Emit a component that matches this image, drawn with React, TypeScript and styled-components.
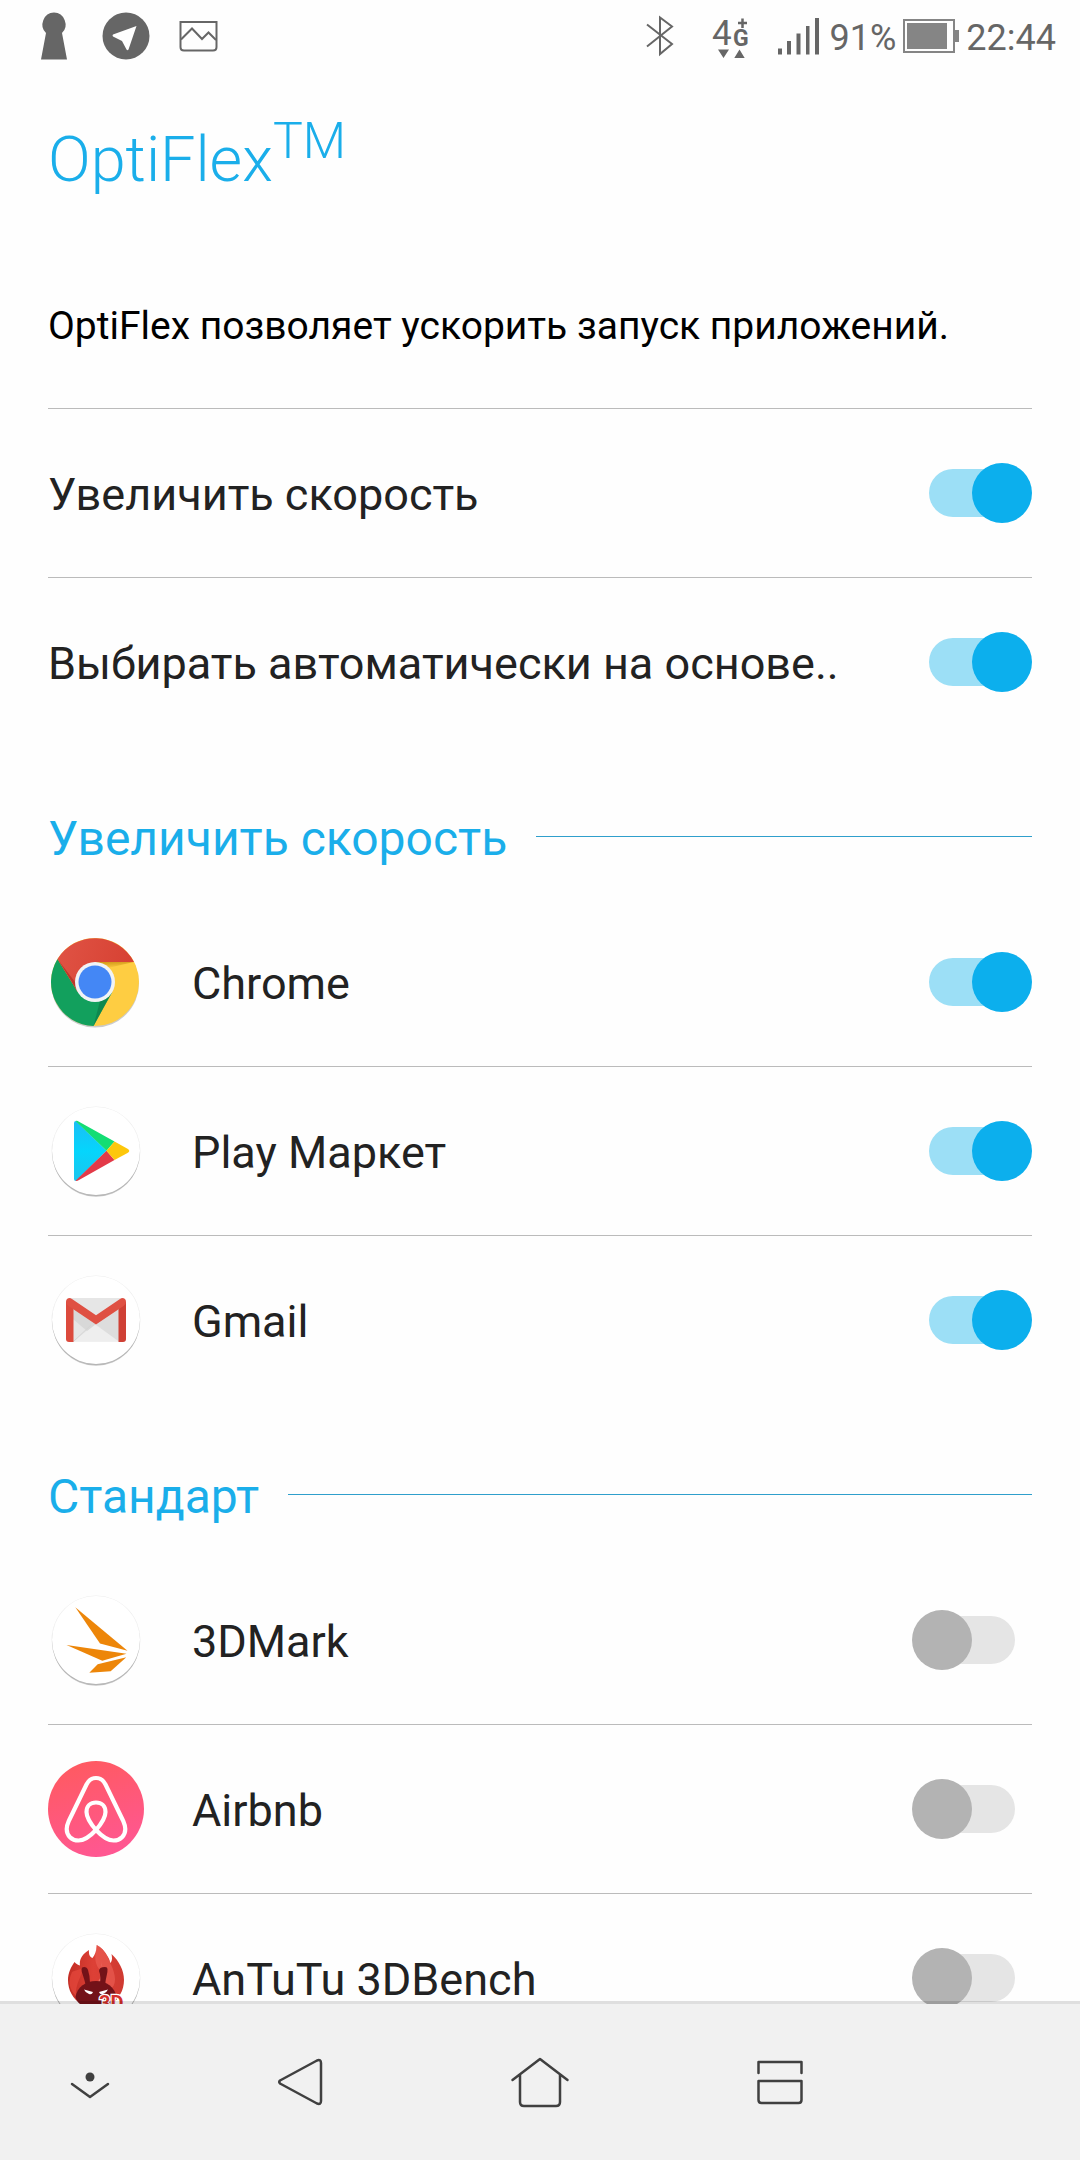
import React, { useId } from "react";
import styled, { createGlobalStyle } from "styled-components";

const GlobalStyle = createGlobalStyle`
  *, *::before, *::after { box-sizing: border-box; }
  body {
    margin: 0;
    background: #fefefe;
    color: #222;
    font-family: Roboto, "Noto Sans", sans-serif;
  }
`;

const Screen = styled.div`
  display: flex;
  flex-direction: column;
  height: 100vh;
`;

const StatusBar = styled.header`
  display: flex;
  flex: none;
  align-items: center;
  justify-content: space-between;
  height: 72px;
  padding: 0 24px 0 40px;
  color: #666;
`;

const StatusGroup = styled.div<{ $gap: number }>`
  display: flex;
  align-items: center;
  gap: ${(p) => p.$gap}px;
`;

const StatusText = styled.span`
  padding-top: 3px;
  font-size: 36px;
  line-height: 44px;
`;

const Glyph = styled.svg`
  display: block;
  flex: none;
`;

const Content = styled.main`
  flex: 1;
  min-height: 0;
  margin-bottom: -3px;
  padding: 50px 48px 0;
  overflow-y: auto;
  scrollbar-width: none;
`;

const Title = styled.h1`
  margin: 0;
  color: #1aaeea;
  font-size: 63px;
  font-weight: 300;
  line-height: 76px;
`;

const Trademark = styled.sup`
  font-size: 50px;
  line-height: 0;
  vertical-align: 23px;
`;

const Description = styled.p`
  margin: 0;
  padding: 105px 0 59px;
  border-bottom: 1px solid #bbb;
  color: #000;
  font-size: 39px;
  line-height: 46px;
`;

const List = styled.ul`
  margin: 0;
  padding: 0;
  list-style: none;
`;

const Row = styled.li`
  display: flex;
  align-items: center;
  height: 169px;

  &:not(:last-child) { border-bottom: 1px solid #bbb; }
  &:last-child { height: 168px; }
`;

const IconSlot = styled.span`
  flex: none;
  width: 144px;
`;

const Label = styled.label`
  flex: 1;
  padding-top: 3px;
  font-size: 45px;
  line-height: 54px;
`;

const Toggle = styled.input`
  display: grid;
  flex: none;
  align-items: center;
  width: 120px;
  height: 60px;
  margin: 0;
  appearance: none;
  cursor: pointer;

  &::before, &::after {
    content: "";
    grid-area: 1 / 1;
  }
  &::before {
    justify-self: center;
    width: 86px;
    height: 48px;
    border-radius: 24px;
    background: #e5e5e5;
  }
  &::after {
    justify-self: start;
    width: 60px;
    height: 60px;
    border-radius: 50%;
    background: #b3b3b3;
  }
  &:checked::before { background: #9cdff6; }
  &:checked::after {
    justify-self: end;
    background: #0cafed;
  }
`;

const SectionTitle = styled.h2`
  display: flex;
  align-items: center;
  gap: 29px;
  height: 152px;
  margin: 0;
  padding-top: 28px;
  color: #1aaeea;
  font-size: 48px;
  font-weight: 400;
  line-height: 56px;

  &::after {
    content: "";
    flex: 1;
    height: 1px;
    background: #2f9fcc;
  }
`;

const SectionName = styled.span`
  padding-top: 5px;
`;

const NavBar = styled.nav`
  position: relative;
  display: grid;
  flex: none;
  grid-template-columns: 180px 240px 240px 240px;
  height: 159px;
  border-top: 3px solid rgba(0, 0, 0, 0.12);
  background: #f1f1f1;
  background-clip: padding-box;
`;

const NavButton = styled.button`
  display: grid;
  place-items: center;
  padding: 0;
  border: 0;
  background: none;
  color: #404040;
  cursor: pointer;
`;

const Disc = () => (
  <>
    <circle cx="48" cy="50.500" r="43.500" fill="#000" opacity="0.08" />
    <circle cx="48" cy="49.500" r="44" fill="#000" opacity="0.2" />
    <circle cx="48" cy="48" r="44.500" fill="#000" opacity="0.07" />
    <circle cx="48" cy="48" r="44" fill="#fff" />
  </>
);

const AppIcon = ({ children }: { children: React.ReactNode }) => (
  <Glyph width="96" height="96" viewBox="0 0 96 96" aria-hidden="true">
    {children}
  </Glyph>
);

const ChromeIcon = () => (
  <AppIcon>
    <defs>
      <linearGradient id="chromeRed" x1="0" y1="0" x2="1" y2="0.2">
        <stop offset="0" stopColor="#e05345" />
        <stop offset="1" stopColor="#d74233" />
      </linearGradient>
      <linearGradient id="chromeShade" x1="0.3" y1="0" x2="0.6" y2="1">
        <stop offset="0" stopColor="#d29a19" />
        <stop offset="1" stopColor="#fecd42" />
      </linearGradient>
    </defs>
    <circle cx="47" cy="49.500" r="44" fill="#000" opacity="0.2" />
    <circle cx="47" cy="48" r="44" fill="#fecd42" />
    <path d="M47 28H85.800L60 34z" fill="url(#chromeShade)" />
    <path d="M9.500 25A44 44 0 0 0 45.500 92L64.200 58L47 48L29.800 58z" fill="#12a05d" />
    <path d="M45.500 92L64.200 58L52 67z" fill="#0d7d49" opacity="0.7" />
    <path d="M9.500 25A44 44 0 0 1 86 28H47V48L29.800 58z" fill="url(#chromeRed)" />
    <path d="M9.500 25L29.800 58L27 48z" fill="#ab2f22" opacity="0.7" />
    <circle cx="47" cy="48" r="20" fill="#f1f3f5" />
    <circle cx="47" cy="48" r="16.500" fill="#4487f5" />
  </AppIcon>
);

const PlayIcon = () => (
  <AppIcon>
    <defs>
      <linearGradient id="playBlue" x1="0" y1="0" x2="0" y2="1">
        <stop offset="0" stopColor="#1cbef5" />
        <stop offset="0.5" stopColor="#05d5fc" />
        <stop offset="1" stopColor="#1cc5ee" />
      </linearGradient>
    </defs>
    <Disc />
    <path d="M28 18Q26 18 26 20V76Q26 78 28 78L58.500 47.700z" fill="url(#playBlue)" />
    <path d="M27.500 18Q29 17.500 31 18.700L66.500 38.500L58.500 47.700z" fill="#13dd74" />
    <path d="M27.500 77.800Q29 78.300 31 77L66.500 57L58.500 47.700z" fill="#e33a48" />
    <path d="M66.500 38.500L79.500 45.800Q83 48 79.500 50L66.500 57L58.500 47.700z" fill="#fdc70b" />
  </AppIcon>
);

const GmailIcon = () => (
  <AppIcon>
    <Disc />
    <path d="M22 26H74V69.500H22z" fill="#e6e6e6" />
    <path d="M25 69.500L48 52L71 69.500z" fill="#eee" />
    <path d="M25 37L48 52L39 59L25 47z" fill="#cfcfcf" opacity="0.6" />
    <path d="M25.500 69.500L43 53" stroke="#d4d4d4" strokeWidth="1" />
    <path d="M48 53L71 37V69.500z" fill="#d8d8d8" opacity="0.7" />
    <path d="M18 30H25.500V70H21Q18 70 18 67z" fill="#dc4a3d" />
    <path d="M78 30H70.500V70H75Q78 70 78 67z" fill="#cf4035" />
    <path d="M18 30Q18 26 22 26L24 27L48 43.300L72 27L74 26Q78 26 78 30Q78 32.500 75.500 34L48 52.500L20.500 34Q18 32.500 18 30z" fill="#df5043" />
  </AppIcon>
);

const ThreeDMarkIcon = () => (
  <AppIcon>
    <Disc />
    <g fill="#ed8609">
      <path d="M27.300 15.300L79.500 58.800L52 51.500z" />
      <path d="M18.500 53L78.500 61.700L54.300 68.700z" />
      <path d="M78.300 65.200L62.700 79.300L41.300 80.700L49.700 72.300z" />
    </g>
  </AppIcon>
);

const AirbnbIcon = () => (
  <AppIcon>
    <defs>
      <linearGradient id="airbnbFill" x1="0.2" y1="0" x2="0.5" y2="1">
        <stop offset="0" stopColor="#ff5a5f" />
        <stop offset="1" stopColor="#ff5792" />
      </linearGradient>
    </defs>
    <circle cx="48" cy="48" r="48" fill="url(#airbnbFill)" />
    <path
      d="M48 69C42 62 38.500 56 38.500 51C38.500 45 42.500 41.500 48 41.500C53.500 41.500 57.500 45 57.500 51C57.500 56 54 62 48 69C41 76.500 35.500 79.500 30.500 79.500C23.500 79.500 18.700 74.500 18.700 68C18.700 64.500 19.700 62.500 21 59.500L38.500 23.500C41 18.500 43.500 17 48 17C52.500 17 55 18.500 57.500 23.500L75 59.500C76.300 62.500 77.300 64.500 77.300 68C77.300 74.500 72.500 79.500 65.500 79.500C60.500 79.500 55 76.500 48 69z"
      fill="none"
      stroke="#fff"
      strokeWidth="4.200"
      strokeLinejoin="round"
    />
  </AppIcon>
);

const AntutuIcon = () => (
  <AppIcon>
    <defs>
      <linearGradient id="antutuFlame" x1="0" y1="0" x2="1" y2="0">
        <stop offset="0" stopColor="#c22d24" />
        <stop offset="0.45" stopColor="#dd4036" />
        <stop offset="1" stopColor="#cf3a31" />
      </linearGradient>
    </defs>
    <Disc />
    <path
      d="M48.700 15C53 17 57 21 60 27C61.500 29.500 62 31 62 33C64 31.500 64.500 29 63.500 24C71 31 76 40 76 50C76 66 64 78 48 78C32 78 20 66 20 50C20 43 23 37 26.500 32C28 34 30 35 32 35.500C31 30 34 24 41 20C40.500 25 42 27 44.500 28C47 25 49 20 48.700 15z"
      fill="url(#antutuFlame)"
    />
    <path d="M48.700 15C47 26 46 32 51 39C55 46 57 56 54 62L64 58C70 52 66 40 62 33C60 26 55 18 48.700 15z" fill="#ec6156" opacity="0.6" />
    <path d="M36 36C34 46 27 54 28 66C22 60 19 52 24 42C28 40 33 40 36 36z" fill="#e2463b" opacity="0.8" />
    <path d="M53 32C56 40 54 46 49 53H57z" fill="#f0847a" opacity="0.7" />
    <g fill="#731218">
      <path d="M33.500 39Q33.500 37 36 37Q39 37 40 40Q42 46 42 53L38 56Q36.500 50 34.500 44Q33.500 42 33.500 39z" />
      <path d="M59.500 39Q59.500 37 57 37Q51 37 51 41Q53 46 52 53L57 56Q57.500 50 59 44Q59.500 42 59.500 39z" />
      <path d="M27.500 67C29 57 38 51 48 51C59 51 66 57 69 67C68 73 64 78 48 78C34 78 29 73 27.500 67z" />
    </g>
    <path d="M36 59.500L45 62Q44 65 41 64Q37.500 63 36 59.500z" fill="#fff" />
    <path d="M60 59.500L51 62Q52 65 55 64Q58.500 63 60 59.500z" fill="#fff" />
    <text x="51" y="80" fontSize="20" fontWeight="700" fill="#d42f2b" stroke="#fff" strokeWidth="2.500" paintOrder="stroke">3D</text>
  </AppIcon>
);

interface SettingProps {
  name: string;
  on?: boolean;
  icon?: React.ReactNode;
}

const Setting = ({ name, on = false, icon }: SettingProps) => {
  const id = useId();
  return (
    <Row>
      {icon && <IconSlot>{icon}</IconSlot>}
      <Label htmlFor={id}>{name}</Label>
      <Toggle id={id} type="checkbox" role="switch" defaultChecked={on} />
    </Row>
  );
};

const StatusIcons = () => (
  <StatusBar>
    <StatusGroup $gap={29}>
      <Glyph width="33" height="48" viewBox="0 0 33 48" fill="#666">
        <path d="M14 0.500A12 12 0 0 1 22 21L27 47.500H1L6 21A12 12 0 0 1 14 0.500z" />
      </Glyph>
      <Glyph width="48" height="48" viewBox="0 0 48 48">
        <circle cx="24" cy="24" r="23.500" fill="#666" />
        <path d="M34.500 14L11 22.500Q10 23.500 11 24.500L20 29L24.500 37.500Q25.500 39 26.500 37.500z" fill="#fff" />
      </Glyph>
      <Glyph width="40" height="32" viewBox="0 0 40 32" fill="none" stroke="#666" strokeWidth="2">
        <path d="M1.500 2H37.500V27Q37.500 30.500 34 30.500H5Q1.500 30.500 1.500 27z" />
        <path d="M2 19.500L13 8.500L23 19L29.500 12.500L37 20" />
      </Glyph>
    </StatusGroup>
    <StatusGroup $gap={7}>
      <Glyph width="196" height="44" viewBox="0 0 196 44" role="img" aria-label="Bluetooth, 4G+">
        <path d="M20 10.500L45 30L33 40V3.500L45 12.500L20 32.500" fill="none" stroke="#666" strokeWidth="2" />
        <text x="85" y="31" fontSize="35" fill="#666">4</text>
        <text x="106" y="32" fontSize="23" fontWeight="700" fill="#666">G</text>
        <path d="M115.500 4.500V14M111 9H120" stroke="#666" strokeWidth="2.500" />
        <path d="M91 35.500H102L96.500 44zM107 44.500H118L112.500 35.500z" fill="#666" />
        <path d="M151 34.500H155V40.500H151zM160 27H164V40.500H160zM169.500 19.500H173.500V40.500H169.500zM179 12H182.500V40.500H179zM188 4H192V40.500H188z" fill="#666" />
      </Glyph>
      <StatusText>91%</StatusText>
      <Glyph width="56" height="34" viewBox="0 0 56 34">
        <path d="M1 1H51V33H1z" fill="none" stroke="#858585" strokeWidth="2" />
        <path d="M4 4H44V30H4zM52 11H56V23H52z" fill="#858585" />
      </Glyph>
      <StatusText>22:44</StatusText>
    </StatusGroup>
  </StatusBar>
);

const NavGlyph = ({ children }: { children: React.ReactNode }) => (
  <Glyph width="64" height="64" viewBox="0 0 64 64" fill="none" stroke="currentColor" strokeWidth="2.500" strokeLinecap="round" strokeLinejoin="round">
    {children}
  </Glyph>
);

const App = () => (
  <>
    <GlobalStyle />
    <Screen>
      <StatusIcons />
      <Content>
        <Title>
          OptiFlex<Trademark>TM</Trademark>
        </Title>
        <Description>OptiFlex позволяет ускорить запуск приложений.</Description>
        <List>
          <Setting name="Увеличить скорость" on />
          <Setting name="Выбирать автоматически на основе.." on />
        </List>
        <SectionTitle>
          <SectionName>Увеличить скорость</SectionName>
        </SectionTitle>
        <List>
          <Setting name="Chrome" on icon={<ChromeIcon />} />
          <Setting name="Play Маркет" on icon={<PlayIcon />} />
          <Setting name="Gmail" on icon={<GmailIcon />} />
        </List>
        <SectionTitle>
          <SectionName>Стандарт</SectionName>
        </SectionTitle>
        <List>
          <Setting name="3DMark" icon={<ThreeDMarkIcon />} />
          <Setting name="Airbnb" icon={<AirbnbIcon />} />
          <Setting name="AnTuTu 3DBench" icon={<AntutuIcon />} />
        </List>
      </Content>
      <NavBar>
        <NavButton aria-label="Скрыть панель">
          <NavGlyph>
            <circle cx="32" cy="27" r="4.500" fill="currentColor" stroke="none" />
            <path d="M14 34L32 47L50 34" />
          </NavGlyph>
        </NavButton>
        <NavButton aria-label="Назад">
          <NavGlyph>
            <path d="M12 30.500Q10.500 32 12 33.500L49 53.500Q53 55 53 51V13Q53 9 49 10.500z" />
          </NavGlyph>
        </NavButton>
        <NavButton aria-label="Домой">
          <NavGlyph>
            <path d="M4.500 30L32 9L59.500 30M12 25V52Q12 56 16 56H48Q52 56 52 52V25" />
          </NavGlyph>
        </NavButton>
        <NavButton aria-label="Недавние приложения">
          <NavGlyph>
            <path d="M10.500 23V12H53.500V23M10.500 31H53.500V50Q53.500 53 50.500 53H13.500Q10.500 53 10.500 50z" />
          </NavGlyph>
        </NavButton>
      </NavBar>
    </Screen>
  </>
);

export default App;
